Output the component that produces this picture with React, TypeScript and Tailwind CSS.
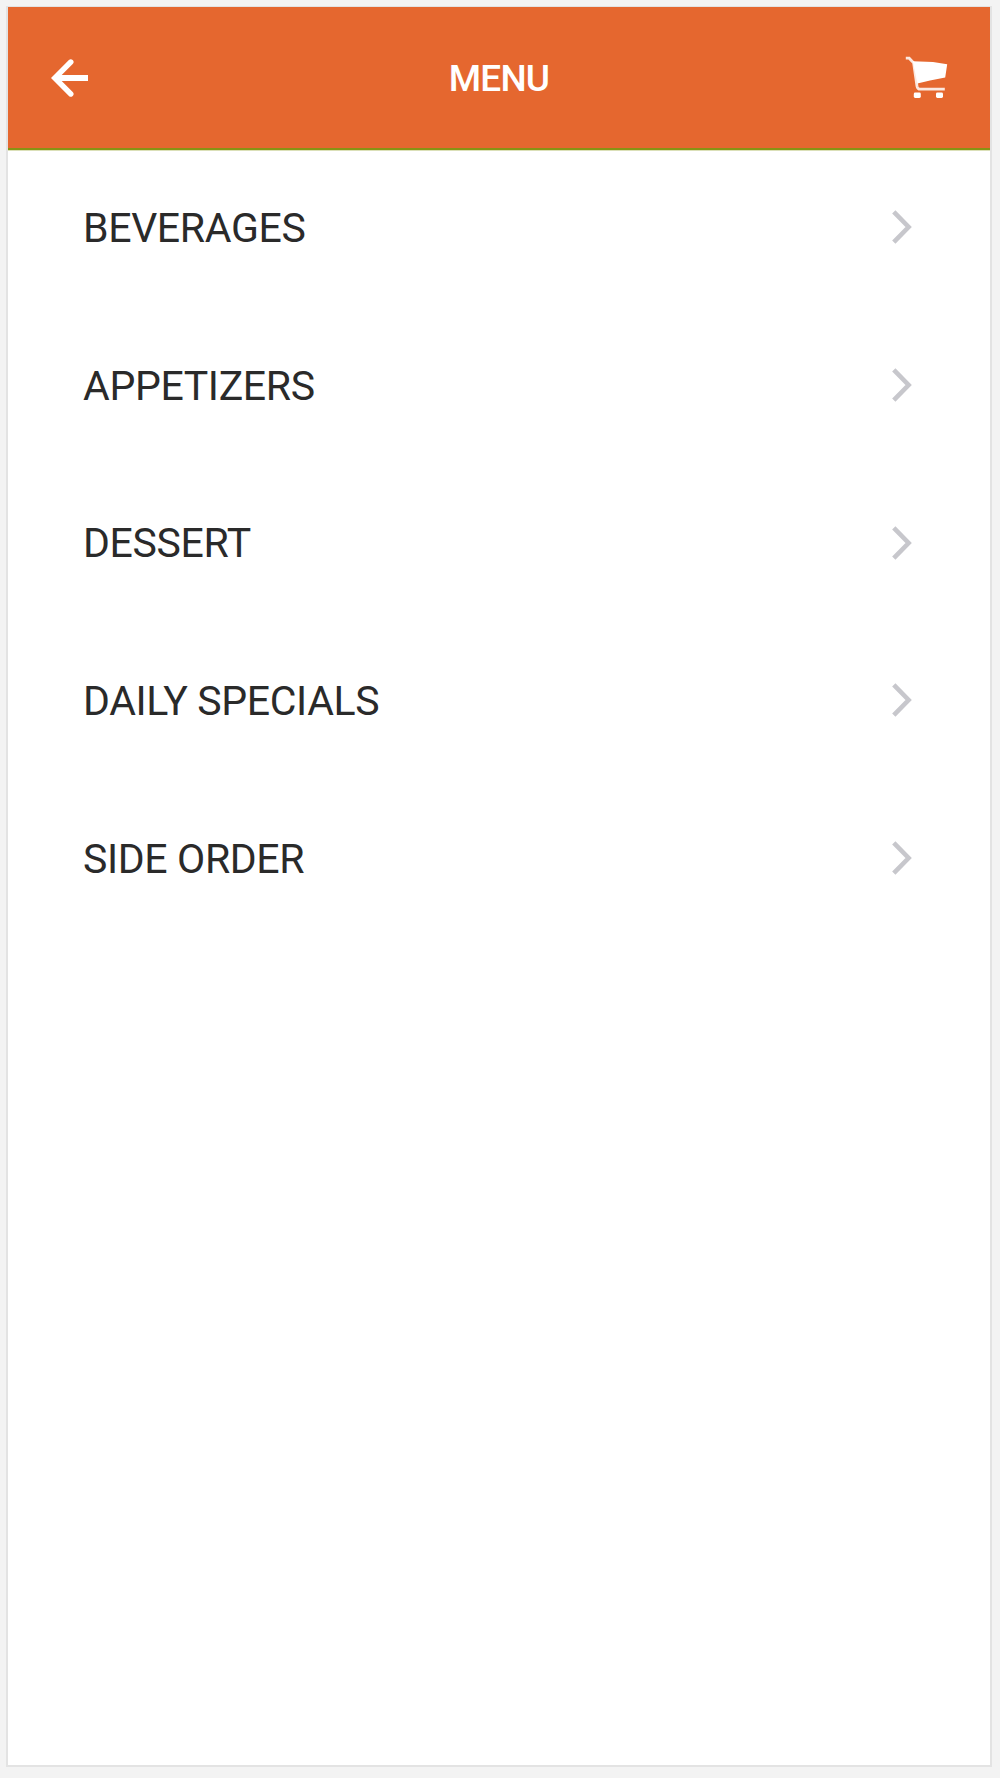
const items = ["BEVERAGES", "APPETIZERS", "DESSERT", "DAILY SPECIALS", "SIDE ORDER"];

function BackArrow() {
  return (
    <svg width="38" height="38" viewBox="0 0 38 38" fill="none" stroke="#fff" aria-hidden="true">
      <path d="M19.8 3 3.8 19 19.8 35" strokeWidth="5.4" strokeLinecap="round" />
      <path d="M4 19H37" strokeWidth="6" />
    </svg>
  );
}

function Cart() {
  return (
    <svg width="44" height="44" viewBox="0 0 44 44" fill="#fff" aria-hidden="true">
      <path d="M.8 2.2h3.4l4.4 4.6 3.4 23.4c.4 2.2 1.4 3 3.2 3h24.6" fill="none" stroke="#fff" strokeWidth="2.8" strokeOpacity=".85" />
      <path d="M7.8 5.3 28 6 42.2 8.2 40.2 21.6 25 24.4 12.4 27.5Z" />
      <rect x="8.8" y="36.6" width="7" height="5.4" rx="1.4" />
      <rect x="31" y="36.6" width="7" height="5.4" rx="1.4" />
    </svg>
  );
}

function Chevron() {
  return (
    <svg width="20" height="34" viewBox="0 0 20 34" fill="none" stroke="#c7c7cc" strokeWidth="4.6" aria-hidden="true">
      <path d="M1.8 1.9 16.6 17 1.8 32.1" />
    </svg>
  );
}

export default function App() {
  return (
    <div className="h-[1778px] w-[1000px] bg-[#f3f3f3] pt-[6px] pl-[6px] font-['Roboto',sans-serif]">
      <div className="h-[1761px] w-[986px] border-2 border-[#e3e3e3] bg-white">
        <header className="-mt-px flex h-[143px] items-center justify-between border-b-2 border-[#879313] bg-[#e5672f] pt-[2px] pr-[41px] pl-[43px] text-white shadow-[0_1px_0_#dbe0b8]">
          <button aria-label="Back" className="pb-[2px]"><BackArrow /></button>
          <h1 className="pl-[4px] text-[37px] font-medium tracking-[-0.8px]">MENU</h1>
          <button aria-label="Cart" className="pb-[2px]"><Cart /></button>
        </header>
        <ul>
          {items.map((item) => (
            <li key={item} className="flex h-[157.7px] items-center justify-between pr-[78px] pl-[75px] text-[41px] text-[#2a2a2a]">
              <span className="tracking-[-0.36px]">{item}</span>
              <span className="pb-[3px]"><Chevron /></span>
            </li>
          ))}
        </ul>
      </div>
    </div>
  );
}
